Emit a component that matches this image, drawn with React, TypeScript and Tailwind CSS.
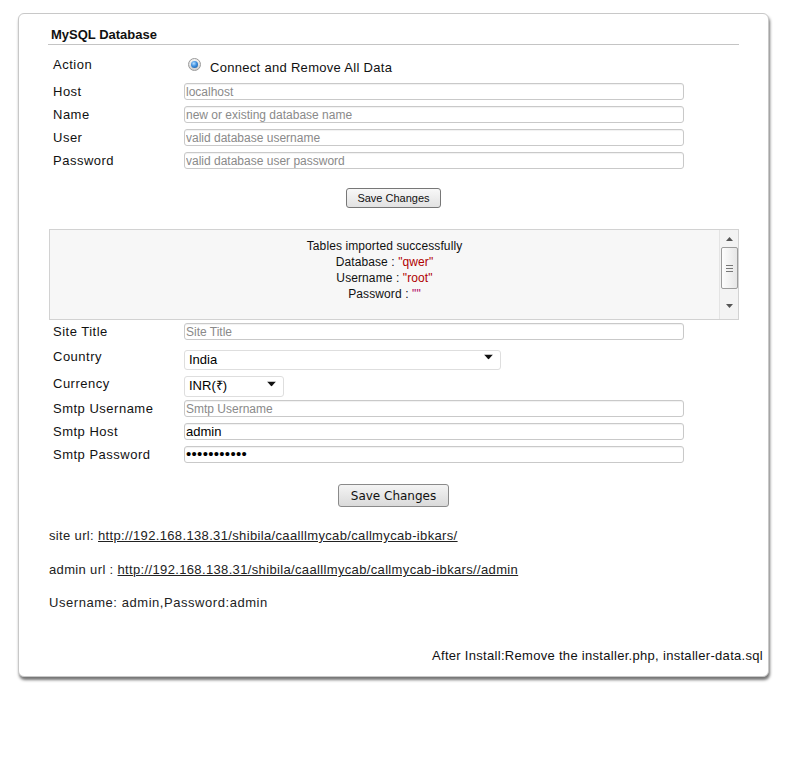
import React from "react";

const inputCls =
  "h-[17px] w-[500px] rounded-[3px] border border-[#c9c9c9] bg-white px-[1px] text-[12px] text-black outline-none placeholder:text-[#8a8a8a] shadow-[inset_0_1px_1px_rgba(0,0,0,0.06)]";

function Row({ label, children, h = "h-[23px]" }: { label: string; children: React.ReactNode; h?: string }) {
  return (
    <div className={`flex items-center ${h}`}>
      <span className="w-[136px] shrink-0 pl-[5px] text-[13px] leading-[16px] tracking-[0.5px] text-[#111]">{label}</span>
      {children}
    </div>
  );
}

function Arrow() {
  return (
    <svg className="pointer-events-none absolute top-1/2 -translate-y-1/2" width="9" height="5" viewBox="0 0 9 5" style={{ right: 8 }}>
      <path d="M0 0h9L4.5 5z" fill="#111" />
    </svg>
  );
}

function Select({ width, value, options }: { width: string; value: string; options: string[] }) {
  return (
    <div className={`relative ${width}`}>
      <select
        defaultValue={value}
        className="h-full w-full appearance-none rounded-[3px] border border-[#dedede] bg-white pl-[4px] text-[13px] leading-[16px] text-black outline-none"
      >
        {options.map((o) => (
          <option key={o}>{o}</option>
        ))}
      </select>
      <Arrow />
    </div>
  );
}

export default function App() {
  return (
    <div className="min-h-[768px] bg-white pt-[13px] font-['Liberation_Sans',Arial,sans-serif] text-black">
      <div className="ml-[18px] w-[751px] rounded-[6px] border border-[#c8c8c8] bg-white pb-[12px] pl-[29px] pr-[5px] shadow-[1px_3px_3px_rgba(0,0,0,0.55)]">
        <div className="w-[691px]">
          <h2 className="border-b border-[#c4c4c4] pl-[3px] pt-[13px] pb-[1px] text-[13px] font-bold leading-[16px] text-[#111]">
            MySQL Database
          </h2>

          <div className="mt-[12px] flex h-[23px] items-start">
            <span className="w-[136px] shrink-0 pl-[5px] text-[13px] leading-[16px] tracking-[0.5px] text-[#111]">Action</span>
            <span className="ml-[4px] mt-[1px] flex h-[13px] w-[13px] items-center justify-center rounded-full border border-[#9a9a9a] bg-[linear-gradient(#f4f4f4,#cfcfcf)]">
              <span className="h-[7px] w-[7px] rounded-full bg-[radial-gradient(circle_at_40%_35%,#b8e0ff,#3d8fe0_45%,#16508f)]" />
            </span>
            <span className="ml-[9px] mt-[3px] text-[13px] leading-[16px] tracking-[0.3px] text-[#111]">
              Connect and Remove All Data
            </span>
          </div>

          <Row label="Host">
            <input className={inputCls} placeholder="localhost" />
          </Row>
          <Row label="Name">
            <input className={inputCls} placeholder="new or existing database name" />
          </Row>
          <Row label="User">
            <input className={inputCls} placeholder="valid database username" />
          </Row>
          <Row label="Password">
            <input className={inputCls} type="password" placeholder="valid database user password" />
          </Row>

          <div className="mt-[16px] flex justify-center">
            <button className="h-[20px] w-[95px] rounded-[3px] border border-[#777] bg-[linear-gradient(#f8f8f8,#e2e2e2)] text-[11px] text-[#111]">
              Save Changes
            </button>
          </div>

          <div className="ml-[1px] mt-[21px] flex h-[91px] border border-[#d2d2d2] bg-[#f7f7f7]">
            <div className="flex-1 pt-[8px] text-center text-[12px] leading-[16px] tracking-[0.1px] text-[#111]">
              <div>Tables imported successfully</div>
              <div>
                Database : <span className="text-[#b00000]">"qwer"</span>
              </div>
              <div>
                Username : <span className="text-[#b00000]">"root"</span>
              </div>
              <div>
                Password : <span className="text-[#b00060]">""</span>
              </div>
            </div>
            <div className="flex w-[19px] flex-col items-center border-l border-[#e4e4e4] bg-[#f3f3f3]">
              <svg className="mt-[7px]" width="7" height="4" viewBox="0 0 7 4">
                <path d="M3.5 0L7 4H0z" fill="#555" />
              </svg>
              <div className="mt-[6px] flex h-[42px] w-[17px] flex-col items-center justify-center gap-[2px] rounded-[2px] border border-[#9c9c9c] bg-[linear-gradient(90deg,#fdfdfd,#e6e6e6)]">
                <span className="h-px w-[7px] bg-[#777]" />
                <span className="h-px w-[7px] bg-[#777]" />
                <span className="h-px w-[7px] bg-[#777]" />
              </div>
              <svg className="mt-[15px]" width="7" height="4" viewBox="0 0 7 4">
                <path d="M0 0h7L3.5 4z" fill="#555" />
              </svg>
            </div>
          </div>

          <Row label="Site Title">
            <input className={inputCls} placeholder="Site Title" />
          </Row>
          <Row label="Country" h="h-[27px]">
            <Select width="h-[20px] w-[317px]" value="India" options={["India"]} />
          </Row>
          <Row label="Currency" h="h-[27px]">
            <Select width="h-[21px] w-[100px]" value="INR(₹)" options={["INR(₹)"]} />
          </Row>
          <Row label="Smtp Username">
            <input className={inputCls} placeholder="Smtp Username" />
          </Row>
          <Row label="Smtp Host">
            <input className={`${inputCls} text-[13px]`} defaultValue="admin" />
          </Row>
          <Row label="Smtp Password">
            <input className={`${inputCls} text-[15px] tracking-[0.3px]`} type="password" defaultValue="admin123456" />
          </Row>

          <div className="mt-[18px] flex justify-center">
            <button className="h-[23px] w-[111px] rounded-[3px] border border-[#8a8a8a] bg-[linear-gradient(#f4f4f4,#dadada)] font-['DejaVu_Sans',sans-serif] text-[12px] text-[#111]">
              Save Changes
            </button>
          </div>

          <p className="ml-[1px] mt-[21px] text-[13px] leading-[16px] tracking-[0.35px] text-[#222]">
            site url:{" "}
            <a href="#" className="underline">
              http://192.168.138.31/shibila/caalllmycab/callmycab-ibkars/
            </a>
          </p>
          <p className="ml-[1px] mt-[18px] text-[13px] leading-[16px] tracking-[0.35px] text-[#222]">
            admin url :{" "}
            <a href="#" className="underline">
              http://192.168.138.31/shibila/caalllmycab/callmycab-ibkars//admin
            </a>
          </p>
          <p className="ml-[1px] mt-[17px] text-[13px] leading-[16px] tracking-[0.55px] text-[#222]">
            Username: admin,Password:admin
          </p>
        </div>
        <p className="mt-[37px] text-right text-[13px] leading-[16px] tracking-[0.3px] text-[#111]">
          After Install:Remove the installer.php, installer-data.sql
        </p>
      </div>
    </div>
  );
}
